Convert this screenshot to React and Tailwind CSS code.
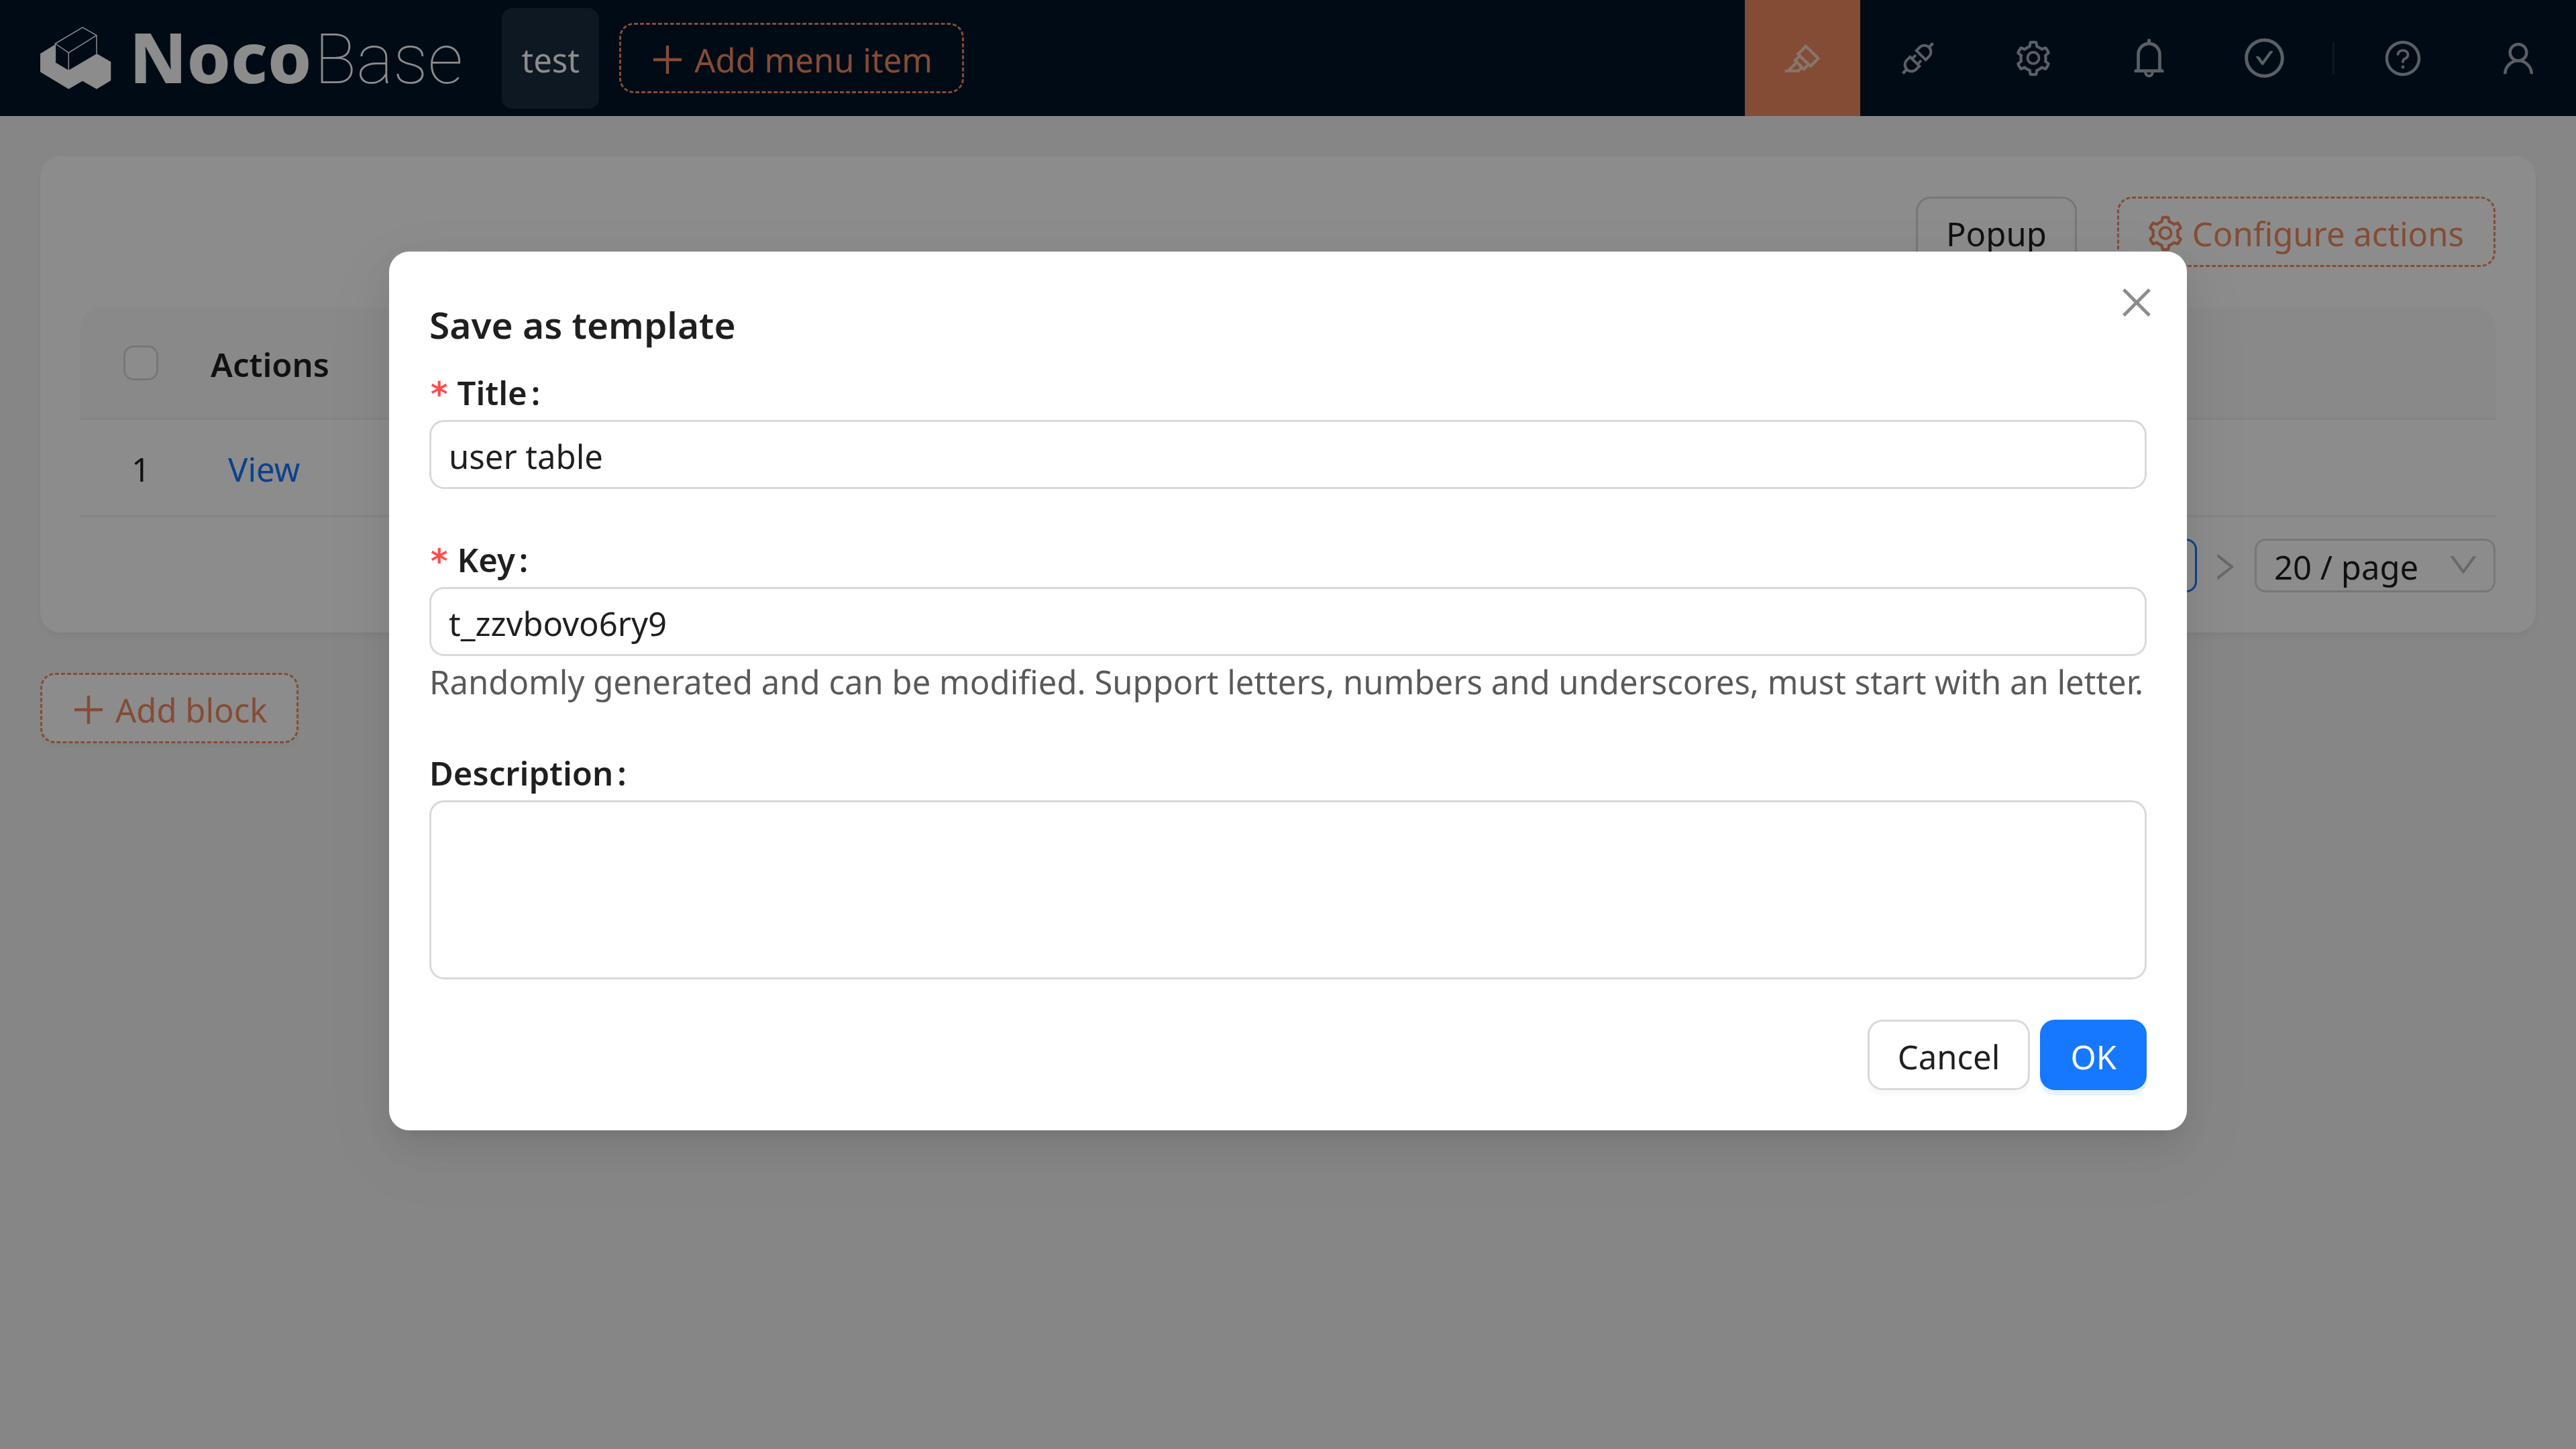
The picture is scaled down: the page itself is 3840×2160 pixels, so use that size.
import {
  AiOutlineApi,
  AiOutlineBell,
  AiOutlineCheckCircle,
  AiOutlineClose,
  AiOutlineDown,
  AiOutlineHighlight,
  AiOutlinePlus,
  AiOutlineQuestionCircle,
  AiOutlineRight,
  AiOutlineSetting,
  AiOutlineUser,
} from "react-icons/ai";

function LogoMark() {
  return (
    <svg viewBox="60 40 106 93" className="h-[93px] w-[106px]" aria-hidden="true">
      <path
        fill="#fff"
        d="M60 80L82 66.5V92.7L102.3 104.7L144.4 80L165.3 92.3V120L144 132.7L123 120.7L102.3 132.7L60 107.3Z"
      />
      <path
        fill="none"
        stroke="#fff"
        strokeWidth="1.5"
        strokeLinejoin="round"
        d="M82.4 92.7V65L123 40.8L144 52.7V80M82.4 65L102.3 78.7L144 52.7M102.3 78.7V105"
      />
    </svg>
  );
}

function DesignButton({ icon, children, className = "" }) {
  return (
    <button
      type="button"
      className={`flex h-[105px] items-center gap-[10px] rounded-[22px] border-[3px] border-dashed border-[#f18b62] pt-1 pr-[44px] pl-[39px] text-[#f18b62] ${className}`}
    >
      {icon}
      {children}
    </button>
  );
}

function HeaderIcon({ label, children, active }) {
  return (
    <button
      type="button"
      aria-label={label}
      className={`flex h-full w-[172px] items-center justify-center text-white/65 ${active ? "bg-[#f18b62]" : ""}`}
    >
      {children}
    </button>
  );
}

function Header() {
  return (
    <header className="flex h-[173px] items-center bg-[#001529] pl-[60px] text-white">
      <a href="#home" className="flex items-center gap-[27px] text-[104px] leading-none">
        <LogoMark />
        <span className="flex items-baseline gap-1">
          <span className="font-extrabold">Noco</span>
          <span className="font-[Roboto,sans-serif] font-thin">Base</span>
        </span>
      </a>
      <nav className="ml-[58px] flex items-center gap-[30px]">
        <a href="#test" className="flex h-[150px] w-[145px] items-center justify-center rounded-2xl bg-white/10 pt-1">
          test
        </a>
        <DesignButton icon={<AiOutlinePlus className="size-[60px]" />}>Add menu item</DesignButton>
      </nav>
      <div className="ml-auto flex h-full items-center">
        <HeaderIcon label="UI editor" active>
          <AiOutlineHighlight className="size-[60px]" />
        </HeaderIcon>
        <HeaderIcon label="Plugins">
          <AiOutlineApi className="size-[60px]" />
        </HeaderIcon>
        <HeaderIcon label="Settings">
          <AiOutlineSetting className="size-[60px]" />
        </HeaderIcon>
        <HeaderIcon label="Notifications">
          <AiOutlineBell className="size-[67px]" />
        </HeaderIcon>
        <HeaderIcon label="Tasks">
          <AiOutlineCheckCircle className="size-[67px]" />
        </HeaderIcon>
        <span className="mx-4 h-12 w-[3px] bg-white/10" />
        <HeaderIcon label="Help">
          <AiOutlineQuestionCircle className="size-[60px]" />
        </HeaderIcon>
        <HeaderIcon label="User">
          <AiOutlineUser className="size-[60px]" />
        </HeaderIcon>
      </div>
    </header>
  );
}

function TableCard() {
  return (
    <section className="rounded-[30px] bg-white p-[60px] shadow-[0_4px_8px_rgba(0,0,0,0.03),0_4px_22px_-4px_rgba(0,0,0,0.02),0_8px_15px_rgba(0,0,0,0.02)]">
      <div className="flex justify-end gap-[60px]">
        <button type="button" className="h-[105px] rounded-[22px] border-[3px] border-[#d9d9d9] px-[42px] pt-1">
          Popup
        </button>
        <DesignButton icon={<AiOutlineSetting className="size-[60px]" />}>Configure actions</DesignButton>
      </div>
      <table className="mt-[60px] w-full border-separate border-spacing-0 text-left">
        <thead>
          <tr className="h-[168px]">
            <th className="w-[180px] rounded-tl-[30px] border-b-[3px] border-[#f0f0f0] bg-[#fafafa]">
              <input
                type="checkbox"
                aria-label="Select all"
                className="mx-auto block size-[52px] appearance-none rounded-[15px] border-[3px] border-[#d9d9d9] bg-white"
              />
            </th>
            <th className="rounded-tr-[30px] border-b-[3px] border-[#f0f0f0] bg-[#fafafa] pt-1 pl-[14px] font-semibold">
              Actions
            </th>
          </tr>
        </thead>
        <tbody>
          <tr className="h-[145px]">
            <td className="border-b-[3px] border-[#f0f0f0] pt-1 text-center">1</td>
            <td className="border-b-[3px] border-[#f0f0f0] pt-1 pl-10">
              <a href="#view" className="text-[#1677ff]">
                View
              </a>
            </td>
          </tr>
        </tbody>
      </table>
      <div className="mt-8 flex items-center justify-end">
        <button type="button" className="size-20 rounded-2xl border-[3px] border-[#1677ff] text-[#1677ff]">
          1
        </button>
        <button
          type="button"
          aria-label="Next page"
          className="flex h-20 w-[86px] items-center justify-center pt-1 pr-1 text-black/25"
        >
          <AiOutlineRight className="size-[52px]" />
        </button>
        <div className="relative">
          <select
            aria-label="Rows per page"
            className="block h-20 w-[359px] appearance-none rounded-2xl border-[3px] border-[#d9d9d9] bg-white pt-1 pl-[26px] leading-[70px]"
          >
            <option>20 / page</option>
            <option>50 / page</option>
            <option>100 / page</option>
          </select>
          <AiOutlineDown className="pointer-events-none absolute top-[13px] right-[22px] size-[52px] text-black/25" />
        </div>
      </div>
    </section>
  );
}

function FieldLabel({ htmlFor, required, children }) {
  return (
    <label htmlFor={htmlFor} className="flex h-[83px] items-center font-semibold">
      {required && (
        <span className="mr-3 pt-2 font-['DejaVu_Sans_Mono',monospace] font-bold text-[#ff4d4f]">*</span>
      )}
      {children}
      <span className="ml-[6px]">:</span>
    </label>
  );
}

function TemplateDialog() {
  const field = "block w-full rounded-[22px] border-[3px] border-[#d9d9d9] bg-white px-[26px] pt-1";
  return (
    <div className="fixed inset-0 flex items-start justify-center bg-black/45 px-[60px] pt-[375px]">
      <form
        role="dialog"
        aria-labelledby="dialog-title"
        className="relative w-full max-w-[2680px] rounded-[30px] bg-white p-[60px] shadow-[0_22px_60px_rgba(0,0,0,0.08),0_11px_22px_-15px_rgba(0,0,0,0.12),0_34px_105px_30px_rgba(0,0,0,0.05)]"
      >
        <button type="button" aria-label="Close" className="absolute top-[45px] right-[44px] text-black/45">
          <AiOutlineClose className="size-[62px]" />
        </button>
        <h1 id="dialog-title" className="mb-[14px] pt-1 text-[55px] leading-[90px] font-semibold">
          Save as template
        </h1>
        <FieldLabel htmlFor="title" required>
          Title
        </FieldLabel>
        <input id="title" defaultValue="user table" className={`h-[103px] ${field}`} />
        <div className="mt-[63px]">
          <FieldLabel htmlFor="key" required>
            Key
          </FieldLabel>
          <input id="key" defaultValue="t_zzvbovo6ry9" className={`h-[103px] ${field}`} />
          <p className="leading-[76px] text-black/65">
            Randomly generated and can be modified. Support letters, numbers and underscores, must start with an letter.
          </p>
        </div>
        <div className="mt-[56px]">
          <FieldLabel htmlFor="description">Description</FieldLabel>
          <textarea id="description" className={`h-[267px] resize-none ${field}`} />
        </div>
        <div className="mt-[60px] flex justify-end gap-[15px]">
          <button
            type="button"
            className="h-[105px] rounded-[22px] border-[3px] border-[#d9d9d9] bg-white px-[42px] pt-1 shadow-[0_8px_0_rgba(0,0,0,0.02)]"
          >
            Cancel
          </button>
          <button
            type="button"
            className="h-[105px] rounded-[22px] bg-[#1677ff] px-[45px] pt-1 text-white shadow-[0_8px_0_rgba(5,145,255,0.1)]"
          >
            OK
          </button>
        </div>
      </form>
    </div>
  );
}

export default function App() {
  return (
    <div className="min-h-screen bg-[#f5f5f5] font-['Noto_Sans',sans-serif] text-[49px] leading-[72px] text-black/88">
      <Header />
      <main className="p-[60px]">
        <TableCard />
        <DesignButton icon={<AiOutlinePlus className="size-[60px]" />} className="mt-[60px] bg-white shadow-[0_8px_0_rgba(0,0,0,0.02)]">
          Add block
        </DesignButton>
      </main>
      <TemplateDialog />
    </div>
  );
}
